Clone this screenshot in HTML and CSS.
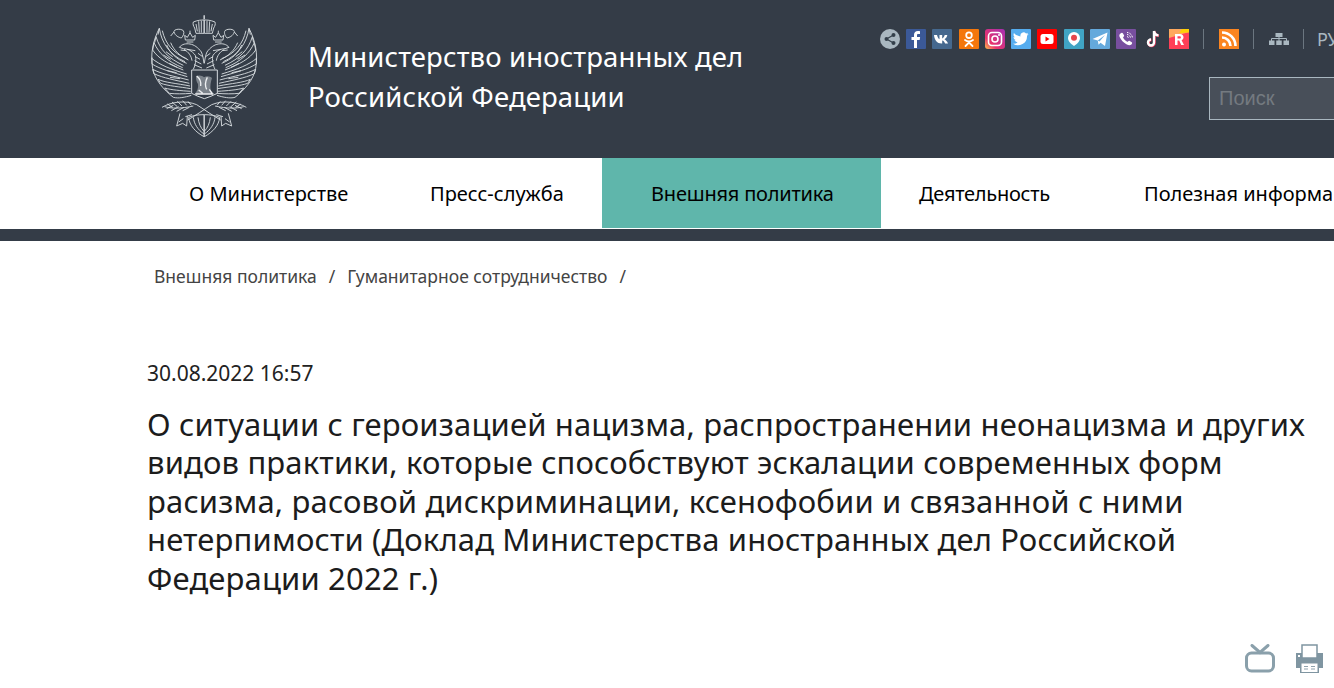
FILE: index.html
```html
<!DOCTYPE html>
<html lang="ru">
<head>
<meta charset="utf-8">
<title>МИД России</title>
<link rel="stylesheet" href="styles.css">
</head>
<body>
<header class="top">
  <div class="brand">
    <svg class="crest" viewBox="0 0 450 450" fill="none" stroke="#d5dade" stroke-width="2.800">
      <defs>
        <g id="half">
          <path d="M88 85C70 120 60 160 68 205C75 240 100 268 130 292C145 296 165 292 184 286"/>
          <path d="M88 85C95 130 120 165 165 185M97 92C106 132 130 160 170 176M78 110C90 150 115 175 160 196M72 128C86 160 112 184 158 203M68 150C85 176 115 192 160 210M65 175C90 195 120 207 170 222M66 192C92 208 124 216 172 230M68 208C95 222 130 228 176 240M74 222C100 234 134 240 178 250M84 238C105 248 140 250 180 258M92 250C115 258 148 260 182 266M104 264C124 270 152 272 182 274M118 280C136 282 160 282 184 280"/>
          <path d="M88 85L84 104M78 110L74 128M72 128L68 150M66 172L66 192M68 208L72 222M84 238L92 250M104 264L118 280"/>
          <path d="M110 135C120 160 140 178 170 190M122 128C132 152 150 168 175 180M100 165L122 178M108 155L128 170M118 190L142 202M112 212L140 218M120 232L150 236"/>
          <path d="M132 96C130 88 150 84 160 92C164 98 160 108 154 114M132 96C136 108 146 112 154 114M132 96L122 108"/>
          <path d="M166 120L164 106L172 112L180 98L188 112L196 106L194 120ZM170 126H190M180 98V92"/>
          <path d="M148 142C156 132 168 130 180 132C192 134 204 142 214 156C218 164 220 176 222 190M148 142L160 146C172 146 186 152 196 166C200 178 196 196 190 208M162 148C176 156 184 168 186 182M172 148L196 152M152 150L168 152"/>
          <path d="M196 170L210 178M194 182L214 192M192 194L216 204M204 160L218 170"/>
          <path d="M222 46V58M190 66C204 60 214 60 222 60V100H198L194 84C190 78 188 72 190 66ZM206 64L208 98M214 62V98M198 72L202 94"/>
          <path d="M96 322C125 305 165 300 200 314C225 330 250 348 272 360"/>
          <path d="M104 320C125 326 155 326 190 318M112 312L128 322M126 306L142 320M142 304L156 318M158 302L170 316M174 304L184 316M110 326L130 316M124 332L146 320M140 334L162 322M158 332L178 322"/>
          <path d="M150 340L140 378L158 370L170 378L172 348M146 366L160 356M166 350L186 344"/>
          <path d="M176 352C178 376 196 396 222 410M190 352C192 372 204 390 222 402M204 352C206 370 212 384 222 394M176 352C190 346 206 344 222 344M222 344V410"/>
        </g>
      </defs>
      <use href="#half"/>
      <use href="#half" transform="translate(445 0) scale(-1 1)"/>
      <path d="M185 210H262V280C250 286 236 292 223 296C210 292 197 286 185 280Z" fill="#343c47" stroke-width="3"/>
      <path d="M198 230C206 224 216 226 222 232C230 226 240 228 246 234C242 246 240 258 242 270L252 282H194C202 274 206 264 204 252C200 246 198 238 198 230Z" fill="#d5dade" fill-opacity=".45" stroke="none"/>
      <path d="M200 228C210 236 214 246 212 258M232 232C226 244 224 256 230 268M196 282H250M206 270L218 280M238 268L246 280" stroke-width="4" stroke="#eef0f2"/>
    </svg>
    <div class="ministry">Министерство иностранных дел<br>Российской Федерации</div>
  </div>
  <div class="tools">
    <div class="toolrow">
      <span class="share"><svg viewBox="0 0 20 20" width="20" height="20"><circle cx="10" cy="10" r="10" fill="#a9b7c0"/><g fill="#34404b"><circle cx="6.500" cy="10" r="2"/><circle cx="13.500" cy="6" r="2"/><circle cx="13.500" cy="14" r="2"/></g><path d="M13.500 6l-7 4 7 4" stroke="#34404b" fill="none" stroke-width="1.200"/></svg></span>
      <svg class="soc" viewBox="0 0 20 20"><rect width="20" height="20" rx="1" fill="#3b5998"/><path d="M11 19v-8h2.700l.4-3H11V6.300c0-.9.300-1.300 1.400-1.300H14V2.200C13.600 2.100 12.800 2 11.900 2 9.600 2 8 3.400 8 5.900V8H5.500v3H8v8z" fill="#fff"/></svg>
      <svg class="soc" viewBox="0 0 20 20"><rect width="20" height="20" rx="1" fill="#45688e"/><path d="M2 6h3c.5 2.200 1.500 3.800 2.500 4.300V6h2.700v3.500c1-.2 2-1.800 2.500-3.500h2.600c-.3 2-1.600 3.600-2.800 4.300 1.400.8 2.700 2.200 3.500 4.200h-2.900c-.5-1.600-1.600-2.800-2.900-3v3H9.500C5.200 14.500 2.500 11.300 2 6z" fill="#fff"/></svg>
      <svg class="soc" viewBox="0 0 20 20"><rect width="20" height="20" rx="1" fill="#f4770c"/><circle cx="10" cy="6.200" r="2.800" fill="none" stroke="#fff" stroke-width="1.800"/><path d="M6 11c2.500 1.700 5.500 1.700 8 0M10 12.500v1.500M6.500 17l3.500-3.500 3.500 3.500" fill="none" stroke="#fff" stroke-width="1.800" stroke-linecap="round"/></svg>
      <svg class="soc" viewBox="0 0 20 20"><defs><linearGradient id="ig" x1="0" y1="1" x2="1" y2="0"><stop offset="0" stop-color="#fdc24b"/><stop offset=".3" stop-color="#e8336d"/><stop offset="1" stop-color="#a32fb4"/></linearGradient></defs><rect width="20" height="20" rx="3" fill="url(#ig)"/><rect x="3.500" y="3.500" width="13" height="13" rx="3.500" fill="none" stroke="#fff" stroke-width="1.600"/><circle cx="10" cy="10" r="3" fill="none" stroke="#fff" stroke-width="1.600"/><circle cx="14" cy="6" r="1" fill="#fff"/></svg>
      <svg class="soc" viewBox="0 0 20 20"><rect width="20" height="20" rx="1" fill="#55acee"/><path d="M17.500 5c-.6.300-1.200.5-1.900.5.700-.4 1.200-1 1.400-1.800-.6.400-1.300.6-2 .8a3.200 3.200 0 0 0-5.500 2.900C7 7.200 4.600 6 3 4c-.9 1.500-.4 3.300.9 4.300-.5 0-1-.2-1.400-.4 0 1.500 1.100 2.900 2.500 3.200-.4.100-.9.100-1.400 0 .4 1.300 1.600 2.200 3 2.300A6.400 6.400 0 0 1 2 14.700a9 9 0 0 0 14-8c.6-.4 1.100-1 1.500-1.700z" fill="#fff"/></svg>
      <svg class="soc" viewBox="0 0 20 20"><rect width="20" height="20" rx="1" fill="#ff0000"/><rect x="3.500" y="5" width="13" height="10" rx="2.500" fill="#fff"/><path d="M8.500 7.500v5l4-2.500z" fill="#f00"/></svg>
      <svg class="soc" viewBox="0 0 20 20"><rect width="20" height="20" rx="1" fill="#40a4c4"/><path d="M10 3a6 6 0 0 1 6 6c0 3.500-3.500 6.500-6 8-2.500-1.500-6-4.500-6-8a6 6 0 0 1 6-6z" fill="#fff"/><circle cx="10" cy="8.800" r="3" fill="#e5464b"/></svg>
      <svg class="soc" viewBox="0 0 20 20"><rect width="20" height="20" rx="1" fill="#64a9dc"/><path d="M2.500 10L17.500 3.500 15 17l-4.500-3.300-2 2-.7-4.200z" fill="#fff"/><path d="M7.800 11.500L15 6l-5.500 6.500" fill="#64a9dc"/></svg>
      <svg class="soc" viewBox="0 0 20 20"><rect width="20" height="20" rx="1" fill="#784f9f"/><path d="M4.500 4.500c1-1 2-1 2.500 0l1 1.700c.3.700 0 1.200-.7 1.700-.3.300-.3.600 0 1.200.8 1.500 2 2.700 3.500 3.500.6.300.9.300 1.200 0 .5-.7 1-1 1.700-.7l1.700 1c1 .5 1 1.500 0 2.500-1.300 1.200-2.800 1-5-.2-3-1.600-5.300-4-6.600-6.900-.7-1.600-.7-2.700.7-3.800z" fill="#fff"/><path d="M11 3.500c3 .2 5.300 2.500 5.500 5.500M11 5.500c2 .2 3.300 1.500 3.500 3.500M11 7.500c.8.100 1.400.7 1.500 1.500" fill="none" stroke="#fff" stroke-dasharray="1 .6"/></svg>
      <svg class="soc" viewBox="0 0 20 20"><path d="M11 2v11.500a3 3 0 1 1-3-3M11 2c.3 2.600 2 4.200 4.500 4.400" fill="none" stroke="#ee3a5c" stroke-width="2.600" transform="translate(.5 .4)"/><path d="M11 2v11.500a3 3 0 1 1-3-3M11 2c.3 2.600 2 4.200 4.500 4.400" fill="none" stroke="#fff" stroke-width="2.400"/></svg>
      <svg class="soc" viewBox="0 0 20 20"><rect width="20" height="20" fill="#ff3f57"/><path d="M0 0h20v3L0 9z" fill="#ffa95e"/><path d="M13 0h7v3.500l-10 .500z" fill="#ffcf05"/><path d="M6 16V5h5c2.300 0 3.500 1.300 3.500 3.300 0 1.400-.7 2.400-1.900 2.900L15 16h-2.800l-2-4.400H8.500V16zm2.500-6.500h2.200c.8 0 1.200-.4 1.200-1.100s-.4-1.200-1.200-1.200H8.500z" fill="#fff"/></svg>
      <span class="sep"></span>
      <svg class="soc" viewBox="0 0 20 20"><rect width="20" height="20" fill="#fb8520"/><circle cx="5" cy="15.500" r="2" fill="#fff"/><path d="M3 8.500a8.500 8.500 0 0 1 8.500 8.500M3 3.500A13.500 13.500 0 0 1 16.500 17" fill="none" stroke="#fff" stroke-width="2.600"/></svg>
      <span class="sep"></span>
      <svg class="map" viewBox="0 0 20 12"><g fill="#a9b7c0"><rect x="6.500" y="0" width="7" height="4"/><rect x="0" y="7.500" width="5.500" height="4.500"/><rect x="7.250" y="7.500" width="5.500" height="4.500"/><rect x="14.500" y="7.500" width="5.500" height="4.500"/></g><path d="M2.500 8V5.500h15V8M10 4v4" fill="none" stroke="#a9b7c0"/></svg>
      <span class="sep"></span>
      <span class="lang">РУС</span>
    </div>
    <input class="search" type="text" placeholder="Поиск">
  </div>
</header>
<nav class="nav">
  <a class="nav-item n1">О Министерстве</a>
  <a class="nav-item n2">Пресс-служба</a>
  <a class="nav-item n3 active">Внешняя политика</a>
  <a class="nav-item n4">Деятельность</a>
  <a class="nav-item n5">Полезная информация</a>
</nav>
<div class="rule"></div>
<main class="main">
  <div class="crumbs"><span>Внешняя политика</span><span class="slash">/</span><span>Гуманитарное сотрудничество</span><span class="slash">/</span></div>
  <div class="date">30.08.2022 16:57</div>
  <h1 class="title">О ситуации с героизацией нацизма, распространении неонацизма и других видов практики, которые способствуют эскалации современных форм расизма, расовой дискриминации, ксенофобии и связанной с ними нетерпимости (Доклад Министерства иностранных дел Российской Федерации 2022 г.)</h1>
  <div class="actions">
    <svg class="act tv" viewBox="0 0 30 30" fill="none" stroke="#8aa0ab" stroke-width="3"><path d="M7 1.500l8 7 8-7" stroke-linecap="round"/><rect x="1.500" y="9" width="27" height="18" rx="5"/></svg>
    <svg class="act pr" viewBox="0 0 27 30"><path d="M0 9h27v15H0z" fill="#7f95a1"/><rect x="6" y="1" width="15" height="13" fill="#fff" stroke="#7f95a1" stroke-width="1.500"/><rect x="4" y="18" width="19" height="11" fill="#7f95a1"/><rect x="5.500" y="19.500" width="16" height="8.500" fill="#fff"/><path d="M8 22.500h4M15 22.500h4M8 25h4M15 25h4" stroke="#8fa2ad"/><rect x="2" y="11" width="2" height="2" fill="#fff"/></svg>
  </div>
</main>
</body>
</html>
```
FILE: styles.css
```css
* { box-sizing: border-box; }
html, body { margin: 0; padding: 0; overflow: hidden; }
body { width: 1334px; height: 688px; background: #fff; font-family: "Noto Sans", sans-serif; color: #1a1a1a; }
.top { height: 158px; background: #343c47; display: flex; justify-content: space-between; padding-left: 130px; overflow: hidden; }
.brand { display: flex; align-items: flex-start; }
.crest { width: 150px; height: 150px; flex: none; }
.ministry { margin: 37px 0 0 28px; font-size: 27.500px; letter-spacing: .13px; line-height: 40px; color: #fff; white-space: nowrap; }
.tools { width: 454px; flex: none; padding-top: 29px; display: flex; flex-direction: column; overflow: hidden; }
.toolrow { display: flex; align-items: center; height: 20px; white-space: nowrap; }
.share { width: 20px; height: 20px; margin-right: 6px; flex: none; }
.soc { width: 20px; height: 20px; margin-right: 6.300px; flex: none; }
.sep { width: 1px; height: 20px; background: #6b7680; flex: none; margin: 0 15px 0 7.700px; }
.map { width: 20px; height: 12px; flex: none; margin-right: 6.300px; }
.lang { font-family: "Noto Sans", sans-serif; color: #a9b7c0; font-size: 18px; margin-left: -2px; }
.search { width: 220px; height: 43px; margin: 28px 0 0 329px; flex: none; background: #484f59; border: 1px solid #a9b7c0; padding: 0 9px; font: 20px "Liberation Sans", sans-serif; outline: none; color: #fff; }
.search::placeholder { color: #747a80; opacity: 1; }
.nav { height: 71px; display: flex; overflow: hidden; white-space: nowrap; font-size: 20px; }
.nav-item { height: 70px; display: flex; align-items: center; color: #000; flex: none; }
.n1 { margin-left: 189px; width: 241px; }
.n2 { width: 172px; }
.n3 { width: 279px; padding-left: 49px; background: #5fb6ab; letter-spacing: -.2px; }
.n4 { width: 263px; padding-left: 38px; letter-spacing: -.25px; }
.rule { height: 12px; background: #343c47; }
.main { padding: 0 0 0 147px; }
.crumbs { font-size: 17.500px; color: #444; padding: 23px 0 0 7px; height: 91px; line-height: 24px; }
.slash { margin: 0 12px; }
.date { font-size: 21px; line-height: 26px; margin-top: 28px; color: #222; }
.title { margin: 19px 0 0; width: 1175px; font-size: 31px; font-weight: 400; letter-spacing: .15px; line-height: 38.400px; color: #1c1c1c; }
.actions { display: flex; justify-content: flex-end; gap: 21px; padding-right: 11px; margin-top: 47px; }
.act { height: 30px; flex: none; }
.tv { width: 30px; }
.pr { width: 27px; }
```
